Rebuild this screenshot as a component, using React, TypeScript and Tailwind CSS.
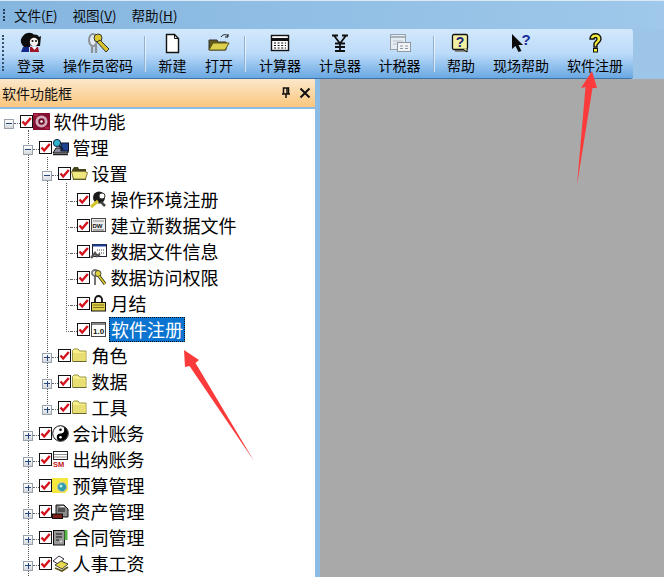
import type { ReactNode } from 'react'

const cjk = "font-['Noto_Sans_CJK_SC','Liberation_Sans',sans-serif]"

const Folder = () => (
  <svg viewBox="0 0 17 17" className="w-[17px] h-[17px]">
    <path d="M1.500 6V3.500L3 2h4l1.500 2H15v10.500H1.500z" fill="#f8f08a" stroke="#9c9748" strokeWidth="1" />
    <path d="M2 6h13v8H2z" fill="#e2d666" opacity=".7" />
    <path d="M2 14.500h13.500" stroke="#6a6630" />
  </svg>
)

const treeIcons: Record<string, ReactNode> = {
  root: (
    <svg viewBox="0 0 17 17" className="w-[17px] h-[17px]">
      <rect x="0" y="0" width="17" height="17" fill="#861030" />
      <circle cx="8.500" cy="8.500" r="6" fill="#d2a9bb" />
      <circle cx="8.500" cy="8.500" r="3.200" fill="#6e0a24" />
      <circle cx="8.500" cy="8.500" r="1.300" fill="#fff" />
      <path d="M1 2h4M12 15h4" stroke="#e2406a" />
    </svg>
  ),
  manage: (
    <svg viewBox="0 0 17 17" className="w-[17px] h-[17px]">
      <path d="M1 14l3-5h12v5z" fill="#8c8c9c" stroke="#111" />
      <path d="M1 15.500h15" stroke="#222" strokeWidth="1.500" />
      <rect x="9" y="4" width="7.500" height="8" fill="#1f4190" stroke="#112" />
      <circle cx="5" cy="4" r="3.600" fill="#2fb4c8" stroke="#124" />
      <path d="M7 6.500l4 4" stroke="#123" strokeWidth="1.800" />
    </svg>
  ),
  openFolder: (
    <svg viewBox="0 0 17 17" className="w-[17px] h-[17px]">
      <path d="M1 5l2-3h4l1 2h7v11H2z" fill="#47431a" />
      <path d="M0.500 6.500h13l3 1-2 6.500H2.500z" fill="#f0e77e" stroke="#80793a" />
    </svg>
  ),
  envReg: (
    <svg viewBox="0 0 17 17" className="w-[17px] h-[17px]">
      <circle cx="9" cy="6.500" r="6" fill="#1a1a1a" />
      <circle cx="12" cy="5" r="3" fill="#fff" stroke="#333" />
      <path d="M1 16l7-6" stroke="#d8c52c" strokeWidth="3" />
      <path d="M11 11l4 4" stroke="#444" strokeWidth="2.500" />
    </svg>
  ),
  newData: (
    <svg viewBox="0 0 17 17" className="w-[17px] h-[17px]">
      <rect x="1.500" y="1.500" width="14" height="13" fill="#eee" stroke="#444" />
      <path d="M3 4h11" stroke="#888" />
      <text x="2.500" y="11" fontSize="6" fontFamily="Liberation Sans" fontWeight="700" fill="#111">DW</text>
      <path d="M3 13h11" stroke="#666" />
    </svg>
  ),
  dataInfo: (
    <svg viewBox="0 0 17 17" className="w-[17px] h-[17px]">
      <rect x="2.500" y="1.500" width="14" height="12" fill="#fff" stroke="#223" />
      <path d="M3 2.500h13" stroke="#1c3f9c" strokeWidth="2" />
      <path d="M7 7h7M9 10h5" stroke="#444" strokeDasharray="1 1" />
      <path d="M1 15l4-5 2 3 3-2" stroke="#555" strokeWidth="2.400" fill="none" />
    </svg>
  ),
  access: (
    <svg viewBox="0 0 17 17" className="w-[17px] h-[17px]">
      <circle cx="5" cy="4" r="3" fill="none" stroke="#777" strokeWidth="1.800" />
      <path d="M5 7v9" stroke="#666" strokeWidth="1.800" />
      <circle cx="8" cy="4.500" r="3" fill="#ddd23c" stroke="#443" />
      <path d="M9 7l6 8" stroke="#222" strokeWidth="3.200" />
      <path d="M9 7l6 8" stroke="#d8c92a" strokeWidth="1.800" />
    </svg>
  ),
  lock: (
    <svg viewBox="0 0 17 17" className="w-[17px] h-[17px]">
      <path d="M5 8V4.500a3.500 3.500 0 0 1 7 0V8" fill="none" stroke="#111" strokeWidth="1.800" />
      <rect x="1.500" y="7.500" width="14" height="8.500" fill="#ded04a" stroke="#111" />
      <path d="M3 10h11M3 12.500h11" stroke="#7e7418" />
    </svg>
  ),
  version: (
    <svg viewBox="0 0 17 17" className="w-[17px] h-[17px]">
      <rect x="1.500" y="1.500" width="14" height="14" fill="#fff" stroke="#444" />
      <path d="M2 3h13" stroke="#888" strokeWidth="2" />
      <text x="3" y="13" fontSize="8" fontFamily="Liberation Sans" fontWeight="700" fill="#111">1.0</text>
    </svg>
  ),
  folder: <Folder />,
  yinyang: (
    <svg viewBox="0 0 17 17" className="w-[17px] h-[17px]">
      <circle cx="8.500" cy="8.500" r="7.800" fill="#fff" stroke="#111" />
      <path d="M8.500 1a7.500 7.500 0 0 1 0 15 3.750 3.750 0 0 1 0-7.500 3.750 3.750 0 0 0 0-7.500z" fill="#000" />
      <circle cx="8.500" cy="4.800" r="1.300" fill="#000" />
      <circle cx="8.500" cy="12.200" r="1.300" fill="#fff" />
    </svg>
  ),
  cash: (
    <svg viewBox="0 0 17 17" className="w-[17px] h-[17px]">
      <rect x="1.500" y="0.500" width="14" height="8" fill="#fff" stroke="#222" />
      <path d="M1.500 3.500h14M1.500 6h14" stroke="#222" strokeDasharray="1 1" />
      <text x="1" y="16" fontSize="7.500" fontFamily="Liberation Sans" fontWeight="700" fill="#c21818">SM</text>
    </svg>
  ),
  budget: (
    <svg viewBox="0 0 17 17" className="w-[17px] h-[17px]">
      <path d="M0 1h16v12l-3 3H0z" fill="#f4e83e" />
      <circle cx="10" cy="10" r="4.500" fill="#2f9ea8" stroke="#bbb" />
      <circle cx="9" cy="9" r="1.500" fill="#bfeef0" />
    </svg>
  ),
  asset: (
    <svg viewBox="0 0 17 17" className="w-[17px] h-[17px]">
      <path d="M4 2h8l4 4v8H4z" fill="#8c8c8c" stroke="#111" />
      <path d="M6 6h7M6 8h7" stroke="#111" />
      <rect x="0.500" y="11" width="10" height="4.500" fill="#7d1f18" stroke="#111" />
      <path d="M8 3.500h4" stroke="#eee" />
    </svg>
  ),
  contract: (
    <svg viewBox="0 0 17 17" className="w-[17px] h-[17px]">
      <rect x="1.500" y="1.500" width="11" height="14.500" fill="#999" stroke="#111" />
      <path d="M4 5h6M4 8h6M4 11h3" stroke="#111" />
      <path d="M14 1v10" stroke="#59b548" strokeWidth="3" />
      <path d="M8 13l2-1" stroke="#fff" />
    </svg>
  ),
  hr: (
    <svg viewBox="0 0 17 17" className="w-[17px] h-[17px]">
      <path d="M1 6l6-5 5 3-6 5z" fill="#fff" stroke="#334" />
      <path d="M3 10l6-4 7 3-6 5z" fill="#e8d84e" stroke="#443" />
      <path d="M3 13l7 3 6-4" fill="none" stroke="#5a5418" strokeWidth="1.800" />
    </svg>
  ),
}

const rows = [
  { depth: 0, label: '软件功能', icon: 'root', open: true },
  { depth: 1, label: '管理', icon: 'manage', open: true },
  { depth: 2, label: '设置', icon: 'openFolder', open: true },
  { depth: 3, label: '操作环境注册', icon: 'envReg' },
  { depth: 3, label: '建立新数据文件', icon: 'newData' },
  { depth: 3, label: '数据文件信息', icon: 'dataInfo' },
  { depth: 3, label: '数据访问权限', icon: 'access' },
  { depth: 3, label: '月结', icon: 'lock' },
  { depth: 3, label: '软件注册', icon: 'version', selected: true },
  { depth: 2, label: '角色', icon: 'folder', open: false },
  { depth: 2, label: '数据', icon: 'folder', open: false },
  { depth: 2, label: '工具', icon: 'folder', open: false },
  { depth: 1, label: '会计账务', icon: 'yinyang', open: false },
  { depth: 1, label: '出纳账务', icon: 'cash', open: false },
  { depth: 1, label: '预算管理', icon: 'budget', open: false },
  { depth: 1, label: '资产管理', icon: 'asset', open: false },
  { depth: 1, label: '合同管理', icon: 'contract', open: false },
  { depth: 1, label: '人事工资', icon: 'hr', open: false },
]

const depthPad = ['pl-[4px]', 'pl-[23px]', 'pl-[42px]', 'pl-[61px]']

const Expander = ({ open }: { open: boolean }) => (
  <div className="w-[10px] h-[10px] mt-[3px] border border-[#98a2ad] bg-gradient-to-b from-white to-[#d5d8dc] flex items-center justify-center relative shrink-0">
    <div className="w-[6px] h-px bg-[#26457a]" />
    {!open && <div className="absolute w-px h-[6px] bg-[#26457a]" />}
  </div>
)

const CheckBox = () => (
  <svg viewBox="0 0 13 13" className="w-[13px] h-[13px] -mt-[2px] shrink-0">
    <rect x="0.500" y="0.500" width="12" height="12" fill="#fff" stroke="#111" />
    <path d="M2.500 6.500l2.700 3L10.800 3" fill="none" stroke="#d4121e" strokeWidth="2.400" />
  </svg>
)

function TreeRow({ row }: { row: (typeof rows)[number] }) {
  return (
    <div className={`flex items-center h-[26px] ${depthPad[row.depth]}`}>
      {row.open === undefined ? (
        <div className="w-[10px] flex justify-end">
          <div className="w-[5px] border-t border-dotted border-[#666] mt-[3px]" />
        </div>
      ) : (
        <Expander open={row.open} />
      )}
      <div className="w-[6px] border-t border-dotted border-[#666] mt-[3px]" />
      <CheckBox />
      <div className="w-[17px] h-[17px] shrink-0 -mt-[2px]">{treeIcons[row.icon]}</div>
      {row.selected ? (
        <div className="ml-[2px] px-[2px] h-[25px] -mt-px bg-[#0a74d0] text-white outline-1 outline-dotted outline-[#111] -outline-offset-1 text-[18px] leading-[24px]">
          {row.label}
        </div>
      ) : (
        <div className="ml-[3.500px] -mt-[2px] text-[18px] leading-[24px] text-black whitespace-nowrap">{row.label}</div>
      )}
    </div>
  )
}

const toolIcons: Record<string, ReactNode> = {
  login: (
    <svg viewBox="0 0 24 22" className="w-[24px] h-[22px]">
      <path d="M4 4c3-4 9-4 11-1l-3 6-1 6H5C1 11 1 7 4 4z" fill="#0c0c0c" />
      <path d="M9 8c2-6 9-7 11-3l2-1-1 10h-9z" fill="#111" />
      <circle cx="15" cy="10" r="4.200" fill="#f6f3ee" />
      <circle cx="13.500" cy="9" r="1" fill="#111" />
      <circle cx="17" cy="9" r="1" fill="#111" />
      <path d="M2 20l2-5h6v5z" fill="#152a86" />
      <path d="M11 15h8l1 5h-9z" fill="#9d1626" />
      <path d="M13 15l2.500 3 2.500-3z" fill="#fff" />
    </svg>
  ),
  key: (
    <svg viewBox="0 0 24 22" className="w-[24px] h-[22px]">
      <ellipse cx="7" cy="8" rx="4" ry="6" fill="#e3ecf3" stroke="#8d9399" strokeWidth="2" />
      <path d="M6 13v8M10 13v8" stroke="#8d9399" strokeWidth="2.200" />
      <circle cx="12" cy="6" r="4" fill="#ddc92d" stroke="#333" />
      <path d="M14 8l9 9-3 3-9-10z" fill="#d8c42a" stroke="#333" />
    </svg>
  ),
  newFile: (
    <svg viewBox="0 0 24 22" className="w-[24px] h-[22px]">
      <path d="M5.500 2.500h8l4 4v14h-12z" fill="#fff" stroke="#111" strokeWidth="1.400" />
      <path d="M13.500 2.500v4h4" fill="none" stroke="#111" />
    </svg>
  ),
  open: (
    <svg viewBox="0 0 24 22" className="w-[24px] h-[22px]">
      <path d="M2 8h8l1 2h8v8H2z" fill="#5f5a1c" stroke="#333" />
      <path d="M2 18l4-7h16l-4 7z" fill="#dcd04e" stroke="#5c5718" />
      <path d="M14 5c2-3 5-3 7-1" fill="none" stroke="#111" />
      <path d="M21 2v3h-3" fill="none" stroke="#111" />
    </svg>
  ),
  calc: (
    <svg viewBox="0 0 24 22" className="w-[24px] h-[22px]">
      <rect x="3.500" y="3.500" width="17" height="15" fill="#fff" stroke="#111" strokeWidth="1.400" />
      <path d="M4 7.500h16" stroke="#111" strokeWidth="3" />
      <path d="M6 11h12M6 13.500h12M6 16h12" stroke="#111" strokeDasharray="2 1.600" />
    </svg>
  ),
  interest: (
    <svg viewBox="0 0 24 22" className="w-[24px] h-[22px]">
      <path d="M4 3.500h6M14 3.500h6M6 3.500l6 8 6-8M12 11.500v7.500M7 19h10M7 11.500h10M7 15h10" fill="none" stroke="#111" strokeWidth="1.800" />
    </svg>
  ),
  tax: (
    <svg viewBox="0 0 24 22" className="w-[24px] h-[22px]">
      <rect x="2.500" y="2.500" width="15" height="15" fill="#e6edf2" stroke="#9aa3ab" />
      <path d="M3 5h14" stroke="#a9b3bb" strokeWidth="2" />
      <path d="M5 9h10M5 12h10" stroke="#b9c2c9" />
      <rect x="9.500" y="10.500" width="13" height="9" fill="#f1f4f6" stroke="#8f98a0" />
      <path d="M12 14h3M17 14h3M12 16.500h3M17 16.500h3" stroke="#8f98a0" />
    </svg>
  ),
  help: (
    <svg viewBox="0 0 24 22" className="w-[24px] h-[22px]">
      <path d="M6 20h13l-1-2H6z" fill="#888" />
      <rect x="3.500" y="2.500" width="15" height="15" rx="1.500" fill="#f1f0a0" stroke="#111" strokeWidth="1.300" />
      <path d="M14 17l4 3v-3" fill="#f1f0a0" stroke="#111" />
      <text x="11" y="15" textAnchor="middle" fontSize="14" fontWeight="700" fontFamily="Liberation Sans" fill="#16227c">?</text>
    </svg>
  ),
  pointer: (
    <svg viewBox="0 0 24 22" className="w-[24px] h-[22px]">
      <path d="M3 2v15l3.500-3 3 6 3-1-3-6h4.500z" fill="#0c0c0c" />
      <text x="17" y="13" textAnchor="middle" fontSize="15" fontWeight="700" fontFamily="Liberation Sans" fill="#1a2d9a">?</text>
    </svg>
  ),
  question: (
    <svg viewBox="0 0 24 22" className="w-[24px] h-[22px]">
      <path d="M7 7c0-7 11-7 11 0 0 3-3 4-4 6v2h-3v-3c0-3 3-3 3-5 0-2-3-2-3 0z" fill="#f7ef39" stroke="#111" strokeWidth="1.400" />
      <rect x="10.500" y="16.500" width="4" height="3.500" fill="#f7ef39" stroke="#111" />
    </svg>
  ),
}

const Sep = ({ className = '' }: { className?: string }) => (
  <div className={`w-[2px] h-[36px] mt-[7px] border-l border-[#8fb2d2] shrink-0 bg-white/60 ${className}`} />
)

function ToolBtn({ label, icon, w }: { label: string; icon: string; w: string }) {
  return (
    <div className={`${w} shrink-0 flex flex-col items-center`}>
      <div className="h-[24px] mt-[2px] flex items-center">{toolIcons[icon]}</div>
      <div className="text-[14px] leading-[20px] text-black whitespace-nowrap">{label}</div>
    </div>
  )
}

const MenuItem = ({ label, k }: { label: string; k: string }) => (
  <span className="text-[13.500px] leading-[20px] text-[#0b0b0b] whitespace-nowrap">
    {label}(<span className="underline">{k}</span>)
  </span>
)

export default function App() {
  return (
    <div className={`w-[664px] h-[577px] overflow-hidden relative bg-[#a9a9a9] ${cjk}`}>
      {/* menu */}
      <div className="h-[29px] bg-gradient-to-r from-[#85b6e0] to-[#9fc8ea] border-t border-[#dbe9f5] flex items-center">
        <div className="w-[2px] h-[12px] ml-[3px] border-l-2 border-dotted border-[#26405c]" />
        <div className="flex items-center gap-[15px] ml-[9px]">
          <MenuItem label="文件" k="F" />
          <MenuItem label="视图" k="V" />
          <MenuItem label="帮助" k="H" />
        </div>
      </div>

      {/* toolbar */}
      <div className="h-[50px] bg-[#9cc5e8]">
        <div className="w-[633px] h-[50px] rounded-tr-[3px] rounded-br-[3px] border-b border-[#3f74a8] bg-gradient-to-b from-[#d3e8fc] via-[#bcdbf9] to-[#69a8e2] flex">
          <div className="w-[2px] h-[36px] mt-[6px] ml-[2px] mr-[6px] border-l-2 border-dotted border-[#33506c] shrink-0" />
          <ToolBtn label="登录" icon="login" w="w-[42px]" />
          <ToolBtn label="操作员密码" icon="key" w="w-[92px]" />
          <Sep />
          <ToolBtn label="新建" icon="newFile" w="w-[53px]" />
          <ToolBtn label="打开" icon="open" w="w-[40px]" />
          <Sep className="ml-[5px]" />
          <ToolBtn label="计算器" icon="calc" w="w-[68px]" />
          <ToolBtn label="计息器" icon="interest" w="w-[52px]" />
          <ToolBtn label="计税器" icon="tax" w="w-[67px]" />
          <Sep />
          <ToolBtn label="帮助" icon="help" w="w-[52px]" />
          <ToolBtn label="现场帮助" icon="pointer" w="w-[68px]" />
          <ToolBtn label="软件注册" icon="question" w="w-[76px] ml-[2px]" />
        </div>
      </div>

      {/* left dock */}
      <div className="w-[320px] h-[498px] bg-[#8cbbe3] pr-[5px]">
        <div className="h-[28px] bg-gradient-to-b from-[#fbe8cb] to-[#fbc67c] flex items-center pl-[2px]">
          <span className="text-[14px] leading-[20px] text-[#111]">软件功能框</span>
          <svg viewBox="0 0 10 12" className="w-[10px] h-[12px] ml-auto">
            <path d="M2.500 1h5v6h-5zM1 7h8M5 7v4" fill="none" stroke="#111" strokeWidth="1.500" />
            <path d="M6 1v6" stroke="#111" strokeWidth="1.500" />
          </svg>
          <svg viewBox="0 0 12 12" className="w-[12px] h-[12px] ml-[8px] mr-[4px]">
            <path d="M1.500 1.500l9 9M10.500 1.500l-9 9" stroke="#111" strokeWidth="2" />
          </svg>
        </div>
        <div className="h-[2px]" />
        <div className="h-[468px] bg-white relative overflow-hidden">
          <div className="absolute left-[28px] top-[21px] h-[460px] border-l border-dotted border-[#555]" />
          <div className="absolute left-[47px] top-[48px] h-[251px] border-l border-dotted border-[#555]" />
          <div className="absolute left-[66px] top-[74px] h-[147px] border-l border-dotted border-[#555]" />
          {rows.map((row) => (
            <TreeRow key={`${row.depth}-${row.label}`} row={row} />
          ))}
        </div>
      </div>

      {/* callout arrows */}
      <svg viewBox="0 0 664 577" className="absolute inset-0 w-[664px] h-[577px] pointer-events-none">
        <path d="M184 350L199 360 195.500 363 254 461 189.500 366 185 367z" fill="#fb3b3b" />
        <path d="M592 71L597 88 592.500 88 577 185 585.500 87 581 88z" fill="#fb3b3b" />
      </svg>
    </div>
  )
}
